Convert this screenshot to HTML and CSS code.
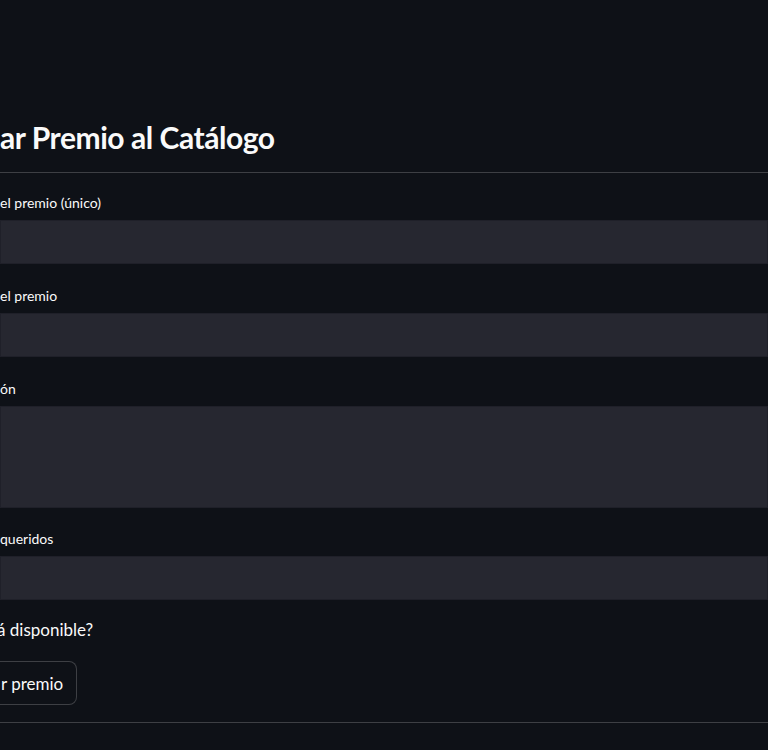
FILE: index.html
```html
<!DOCTYPE html>
<html lang="es">
<head>
<meta charset="utf-8">
<title>Agregar Premio al Catálogo</title>
<link rel="stylesheet" href="styles.css">
</head>
<body>
<main class="form">
  <h2 class="title">ar Premio al Catálogo</h2>
  <hr class="divider divider-top">
  <div class="field">
    <label class="label">el premio (único)</label>
    <div class="input"></div>
  </div>
  <div class="field">
    <label class="label">el premio</label>
    <div class="input"></div>
  </div>
  <div class="field">
    <label class="label">ón</label>
    <div class="input textarea"></div>
  </div>
  <div class="field field-last">
    <label class="label">queridos</label>
    <div class="input"></div>
  </div>
  <div class="check">á disponible?</div>
  <button class="btn">r premio</button>
  <hr class="divider divider-bottom">
</main>
</body>
</html>
```

FILE: styles.css
```css
html, body {
  margin: 0;
  padding: 0;
  background: #0e1117;
  color: #fafafa;
  font-family: "Lato", "Open Sans", sans-serif;
  overflow: hidden;
}
.form {
  display: flex;
  flex-direction: column;
  padding-top: 118px;
}
.title {
  margin: 0;
  font-size: 30px;
  line-height: 38px;
  font-weight: 700;
  letter-spacing: -0.45px;
}
.divider {
  border: none;
  border-top: 1px solid rgba(250, 250, 250, 0.2);
  margin: 0;
  width: 100%;
}
.divider-top {
  margin-top: 16px;
}
.field {
  display: flex;
  flex-direction: column;
  gap: 5px;
  margin-top: 20px;
}
.field:first-of-type {
  margin-top: 18px;
}
.field-last {
  margin-top: 19px;
}
.label {
  font-size: 14px;
  line-height: 24px;
  height: 24px;
}
.input {
  height: 42px;
  background: #262730;
  border: 1px solid #1f2029;
}
.textarea {
  height: 100px;
}
.check {
  margin-top: 18px;
  font-size: 17px;
  line-height: 24px;
  margin-left: -3px;
}
.btn {
  align-self: flex-start;
  margin-top: 19px;
  margin-left: -20px;
  height: 44px;
  padding: 0 13px 0 20px;
  background: #0e1117;
  color: #fafafa;
  border: 1px solid rgba(250, 250, 250, 0.2);
  border-radius: 8px;
  font-family: inherit;
  font-size: 17px;
}
.divider-bottom {
  margin-top: 17px;
}
```
